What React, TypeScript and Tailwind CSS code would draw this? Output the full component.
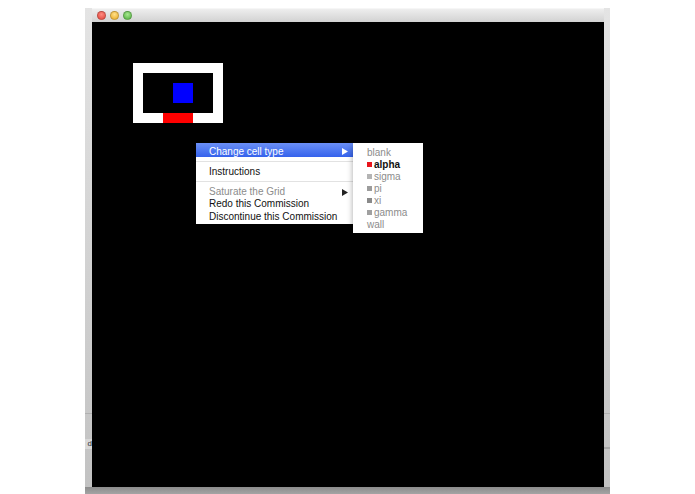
const W = 'bg-white';
const K = 'bg-black';
const U = 'bg-[#0000ff]';
const R = 'bg-[#ff0000]';

const grid: string[][] = [
  [W, W, W, W, W, W, W, W, W],
  [W, K, K, K, K, K, K, K, W],
  [W, K, K, K, U, U, K, K, W],
  [W, K, K, K, U, U, K, K, W],
  [W, K, K, K, K, K, K, K, W],
  [W, W, W, R, R, R, W, W, W],
];

const font = { fontFamily: '"Liberation Sans", Arial, sans-serif' };

function Arrow({ color }: { color: string }) {
  return (
    <svg width="6" height="7" viewBox="0 0 6 7" className="shrink-0">
      <polygon points="0,0 6,3.5 0,7" fill={color} />
    </svg>
  );
}

function Separator() {
  return (
    <div className="h-[8px] flex items-center">
      <div className="h-px w-full bg-[#e2e2e2]" />
    </div>
  );
}

const cellTypes = [
  { name: 'blank', swatch: null, active: false },
  { name: 'alpha', swatch: 'bg-[#e8141c]', active: true },
  { name: 'sigma', swatch: 'bg-[#b4b4b4]', active: false },
  { name: 'pi', swatch: 'bg-[#9c9c9c]', active: false },
  { name: 'xi', swatch: 'bg-[#8a8a8a]', active: false },
  { name: 'gamma', swatch: 'bg-[#a0a0a0]', active: false },
  { name: 'wall', swatch: null, active: false },
];

function SubMenu() {
  return (
    <div className="absolute left-[157px] top-0 w-[70px] bg-white pt-[3px] pb-[3px] shadow-[0_2px_6px_rgba(0,0,0,0.35)]">
      {cellTypes.map((t) => (
        <div key={t.name} className="h-[12px] flex items-center pl-[14px] pt-[1px]">
          {t.swatch && <div className={`w-[5px] h-[5px] mr-[2px] ${t.swatch}`} />}
          <span
            className={
              t.active
                ? 'text-[10px] leading-none font-bold text-[#111]'
                : 'text-[10px] leading-none text-[#8c8c8c]'
            }
          >
            {t.name}
          </span>
        </div>
      ))}
    </div>
  );
}

function ContextMenu() {
  return (
    <div
      className="absolute left-[104px] top-[121px] w-[157px] bg-white pb-[2px] text-[10px] leading-none shadow-[0_2px_6px_rgba(0,0,0,0.35)]"
      style={font}
    >
      <div className="h-[14px] flex items-center justify-between pl-[13px] pr-[5px] pt-[3px] bg-gradient-to-b from-[#6b8ff6] to-[#3562ec] text-white">
        <span>Change cell type</span>
        <Arrow color="#ffffff" />
      </div>
      <Separator />
      <div className="h-[12px] flex items-center pl-[13px] pt-[2px] text-[#111]">Instructions</div>
      <Separator />
      <div className="h-[12px] flex items-center justify-between pl-[13px] pr-[5px] pt-[2px] text-[#8c8c8c]">
        <span>Saturate the Grid</span>
        <Arrow color="#222222" />
      </div>
      <div className="h-[12px] flex items-center pl-[13px] pt-[2px] text-[#111]">Redo this Commission</div>
      <div className="h-[13px] flex items-center pl-[13px] pt-[2px] text-[#111]">Discontinue this Commission</div>
      <SubMenu />
    </div>
  );
}

function Light({ from, to }: { from: string; to: string }) {
  return (
    <div
      className="w-[9px] h-[9px] rounded-full border border-black/20"
      style={{ background: `radial-gradient(circle at 50% 35%, ${from}, ${to})` }}
    />
  );
}

export default function App() {
  return (
    <div className="w-[695px] h-[494px] bg-white pt-[8px] pl-[85px] overflow-hidden">
      <div className="w-[525px] h-[486px] flex flex-col">
        <div className="flex flex-1">
          <div className="w-[7px] flex flex-col bg-gradient-to-b from-[#e4e4e4] to-[#c2c2c2]">
            <div className="h-[405px]" />
            <div className="h-px bg-[#b0b0b0]" />
            <div className="h-[25px]" />
            <div
              className="h-[10px] bg-[#d8d8d8] text-[8px] leading-[10px] text-[#333] overflow-hidden text-right"
              style={font}
            >
              d
            </div>
          </div>
          <div className="w-[512px] flex flex-col">
            <div className="h-[14px] flex items-center gap-[4px] pl-[5px] bg-gradient-to-b from-[#eeeeee] to-[#d2d2d2] border-t border-[#f6f6f6]">
              <Light from="#ff8a80" to="#e0443a" />
              <Light from="#ffe08a" to="#e8a922" />
              <Light from="#a8e890" to="#4fae3b" />
            </div>
            <div className="relative flex-1 bg-black pt-[41px] pl-[41px]">
              <div className="grid grid-cols-[repeat(9,10px)] grid-rows-[repeat(6,10px)] w-[90px]">
                {grid.flat().map((c, i) => (
                  <div key={i} className={c} />
                ))}
              </div>
              <ContextMenu />
            </div>
          </div>
          <div className="w-[6px] flex flex-col bg-gradient-to-b from-[#e4e4e4] to-[#c2c2c2]">
            <div className="h-[405px]" />
            <div className="h-px bg-[#b0b0b0]" />
            <div className="h-[33px]" />
            <div className="h-[2px] bg-[#a8a8a8]" />
          </div>
        </div>
        <div className="h-[7px] bg-gradient-to-b from-[#8c8c8c] to-[#a4a4a4]" />
      </div>
    </div>
  );
}
